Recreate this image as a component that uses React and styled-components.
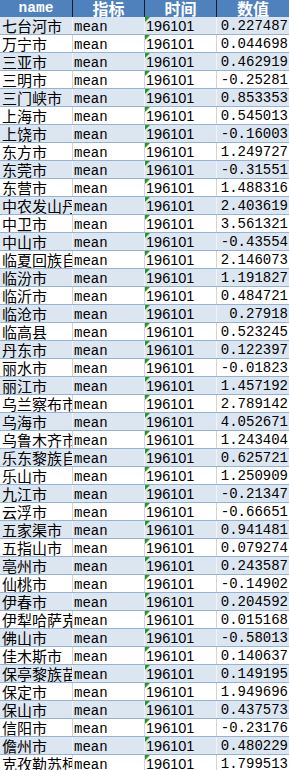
import React from "react";
import styled, { createGlobalStyle } from "styled-components";

const Global = createGlobalStyle`
  html, body { margin: 0; padding: 0; background: #ffffff; overflow: hidden; }
`;

const rows = [
  ["七台河市", "0.227487"],
  ["万宁市", "0.044698"],
  ["三亚市", "0.462919"],
  ["三明市", "-0.25281"],
  ["三门峡市", "0.853353"],
  ["上海市", "0.545013"],
  ["上饶市", "-0.16003"],
  ["东方市", "1.249727"],
  ["东莞市", "-0.31551"],
  ["东营市", "1.488316"],
  ["中农发山丹马场", "2.403619"],
  ["中卫市", "3.561321"],
  ["中山市", "-0.43554"],
  ["临夏回族自治州", "2.146073"],
  ["临汾市", "1.191827"],
  ["临沂市", "0.484721"],
  ["临沧市", "0.27918"],
  ["临高县", "0.523245"],
  ["丹东市", "0.122397"],
  ["丽水市", "-0.01823"],
  ["丽江市", "1.457192"],
  ["乌兰察布市", "2.789142"],
  ["乌海市", "4.052671"],
  ["乌鲁木齐市", "1.243404"],
  ["乐东黎族自治县", "0.625721"],
  ["乐山市", "1.250909"],
  ["九江市", "-0.21347"],
  ["云浮市", "-0.66651"],
  ["五家渠市", "0.941481"],
  ["五指山市", "0.079274"],
  ["亳州市", "0.243587"],
  ["仙桃市", "-0.14902"],
  ["伊春市", "0.204592"],
  ["伊犁哈萨克自治州", "0.015168"],
  ["佛山市", "-0.58013"],
  ["佳木斯市", "0.140637"],
  ["保亭黎族苗族自治县", "0.149195"],
  ["保定市", "1.949696"],
  ["保山市", "0.437573"],
  ["信阳市", "-0.23176"],
  ["儋州市", "0.480229"],
  ["克孜勒苏柯尔克孜自治州", "1.799513"],
  ["兰州市", "0.812345"],
];

const Sheet = styled.div`
  width: 289px;
  height: 770px;
  overflow: hidden;
  display: flex;
  flex-direction: column;
`;

const Grid = styled.div`
  display: grid;
  grid-template-columns: 73px 72px 72px 72px;
  flex: none;
`;

const HeaderRow = styled(Grid)`
  height: 17px;
  background: #4f81bd;
`;

const HeaderCell = styled.div`
  box-sizing: border-box;
  border-right: 1px solid #1a1a2e;
  color: #ffffff;
  font-weight: bold;
  text-align: center;
  line-height: 17px;
  height: 17px;
  overflow: hidden;
  white-space: nowrap;
  font-family: ${(p) =>
    p.$mono
      ? '"Liberation Mono", monospace'
      : '"Noto Sans CJK SC", sans-serif'};
  font-size: ${(p) => (p.$mono ? "14.5px" : "16px")};
  &:last-child { border-right: none; }
`;

const Row = styled(Grid)`
  height: 18px;
  box-sizing: border-box;
  border-bottom: 1px solid #95b3d7;
  background: ${(p) => (p.$band ? "#dce6f1" : "#ffffff")};
`;

const Cell = styled.div`
  position: relative;
  box-sizing: border-box;
  border-right: 1px solid ${(p) => (p.$band ? "#f0f4fa" : "#d4d4d4")};
  overflow: hidden;
  white-space: nowrap;
  color: #000000;
  height: 17px;
  line-height: 17px;
  &:last-child { border-right: none; }
`;

const NameCell = styled(Cell)`
  font-family: "Noto Sans CJK SC", sans-serif;
  font-size: 15px;
  padding-left: 2px;
  line-height: 18px;
`;

const MetricCell = styled(Cell)`
  font-family: "Liberation Mono", monospace;
  font-size: 14px;
  padding-left: 1px;
  line-height: 20px;
`;

const TimeCell = styled(Cell)`
  font-family: "Liberation Sans", sans-serif;
  font-size: 14.5px;
  padding-left: 1px;
  line-height: 19px;
  &::before {
    content: "";
    position: absolute;
    left: 0;
    top: 0;
    width: 0;
    height: 0;
    border-top: 5px solid #1e9c1e;
    border-right: 5px solid transparent;
  }
`;

const ValueCell = styled(Cell)`
  font-family: "Liberation Mono", monospace;
  font-size: 14px;
  text-align: right;
  padding-right: 1px;
  line-height: 19px;
`;

const formatValue = (v) => v.replace(".", ". ").replace("-", "-");

export default function App() {
  return (
    <>
      <Global />
      <Sheet>
        <HeaderRow>
          <HeaderCell $mono>name</HeaderCell>
          <HeaderCell>指标</HeaderCell>
          <HeaderCell>时间</HeaderCell>
          <HeaderCell>数值</HeaderCell>
        </HeaderRow>
        {rows.map(([name, value], i) => {
          const band = i % 2 === 0;
          return (
            <Row key={name} $band={band}>
              <NameCell $band={band}>{name}</NameCell>
              <MetricCell $band={band}>mean</MetricCell>
              <TimeCell $band={band}>196101</TimeCell>
              <ValueCell $band={band}>{value.replace(".", ".")}</ValueCell>
            </Row>
          );
        })}
      </Sheet>
    </>
  );
}
